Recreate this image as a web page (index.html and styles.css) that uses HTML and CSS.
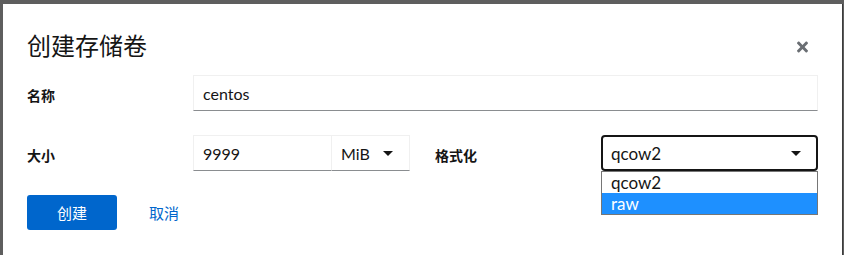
FILE: index.html
```html
<!DOCTYPE html>
<html>
<head>
  <meta charset="utf-8">
  <title>创建存储卷</title>
  <link rel="stylesheet" href="styles.css">
</head>
<body>
  <div class="modal">
    <div class="modal-header">
      <h1>创建存储卷</h1>
      <button class="close" aria-label="关闭">
        <svg viewBox="0 0 352 512" width="11" height="16"><path fill="#6a6e73" d="M242.72 256l100.07-100.07c12.28-12.28 12.28-32.19 0-44.48l-22.24-22.24c-12.28-12.28-32.19-12.28-44.48 0L176 189.28 75.930 89.21c-12.28-12.28-32.190-12.28-44.48 0L9.21 111.45c-12.28 12.28-12.28 32.19 0 44.48L109.28 256 9.21 356.07c-12.28 12.28-12.28 32.19 0 44.48l22.24 22.24c12.28 12.28 32.2 12.28 44.48 0L176 322.72l100.07 100.07c12.28 12.28 32.2 12.28 44.48 0l22.24-22.24c12.28-12.28 12.28-32.19 0-44.48L242.72 256z"/></svg>
      </button>
    </div>

    <div class="form">
      <label class="form-label">名称</label>
      <div class="field wide"><input class="text-input" type="text" value="centos"></div>

      <label class="form-label">大小</label>
      <div class="field size-group">
        <input class="text-input" type="text" value="9999">
        <div class="unit-select">MiB<span class="caret"></span></div>
      </div>

      <label class="form-label second">格式化</label>
      <div class="field format">
        <div class="format-select">qcow2<span class="caret"></span></div>
        <!-- 展開中的下拉選單 -->
        <ul class="options">
          <li>qcow2</li>
          <li class="selected">raw</li>
        </ul>
      </div>
    </div>

    <div class="modal-footer">
      <button class="btn-primary">创建</button>
      <button class="btn-link">取消</button>
    </div>
  </div>
</body>
</html>
```

FILE: styles.css
```css
/* 基本設定 */
html, body {
  margin: 0;
  padding: 0;
  height: 100%;
  background: #5e5e5e;
  font-family: Lato, "Noto Sans CJK SC", sans-serif;
  color: #151515;
  overflow: hidden;
}

.modal {
  box-sizing: border-box;
  margin: 4px 0 0 3px;
  width: 840px;
  height: calc(100vh - 4px);
  padding: 0 24px;
  background: white;
  border-right: 1px solid #3c3c3c;
}

.modal-header {
  display: flex;
  justify-content: space-between;
  align-items: center;
  padding-top: 25px;
}

.modal-header h1 {
  margin: 0;
  font-family: "Noto Sans CJK SC", sans-serif;
  font-size: 24px;
  font-weight: 400;
  line-height: 32px;
}

.close {
  border: none;
  background: none;
  padding: 0;
  margin: 4px 10px 0 0;
  display: flex;
}

/* 表單 */
.form {
  display: grid;
  grid-template-columns: 166px 217px 25px 166px 217px;
  row-gap: 24px;
  margin-top: 14px;
}

.form-label {
  font-family: "Noto Sans CJK SC", sans-serif;
  font-size: 14px;
  font-weight: 700;
  align-self: center;
  padding-top: 3px;
}

.form-label.second {
  grid-column: 4;
}

.field.wide {
  grid-column: 2 / 6;
}

.text-input {
  box-sizing: border-box;
  width: 100%;
  height: 36px;
  border: 1px solid #f0f0f0;
  border-bottom-color: #8a8d90;
  padding: 0 9px;
  font-family: Lato, sans-serif;
  font-size: 16px;
  color: #151515;
  outline: none;
}

.size-group {
  display: flex;
}

.size-group .text-input {
  width: 138px;
  border-right: none;
}

.unit-select {
  box-sizing: border-box;
  width: 79px;
  height: 36px;
  border: 1px solid #f0f0f0;
  border-bottom-color: #8a8d90;
  display: flex;
  align-items: center;
  justify-content: space-between;
  padding: 0 16px 0 9px;
  font-size: 16px;
}

.caret {
  width: 0;
  height: 0;
  border-left: 5px solid transparent;
  border-right: 5px solid transparent;
  border-top: 5px solid #151515;
}

.format {
  position: relative;
}

.format-select {
  box-sizing: border-box;
  height: 36px;
  border: 2px solid #151515;
  border-radius: 4px;
  display: flex;
  align-items: center;
  justify-content: space-between;
  padding: 0 15px 0 8px;
  font-size: 17px;
}

/* 下拉選單 */
.options {
  position: absolute;
  top: 36px;
  left: 0;
  right: 0;
  margin: 0;
  padding: 0;
  list-style: none;
  border: 1px solid #767676;
  background: white;
  font-size: 17px;
}

.options li {
  height: 21px;
  line-height: 21px;
  padding-left: 9px;
}

.options li.selected {
  background: #1e90ff;
  color: white;
}

/* 底部按鈕 */
.modal-footer {
  display: flex;
  align-items: center;
  margin-top: 24px;
}

.btn-primary {
  width: 90px;
  height: 35px;
  border: none;
  border-radius: 3px;
  background: #0066cc;
  color: white;
  font-family: "Noto Sans CJK SC", sans-serif;
  font-size: 15px;
}

.btn-link {
  margin-left: 16px;
  border: none;
  background: none;
  padding: 0 16px;
  color: #0066cc;
  font-family: "Noto Sans CJK SC", sans-serif;
  font-size: 15px;
}
```
